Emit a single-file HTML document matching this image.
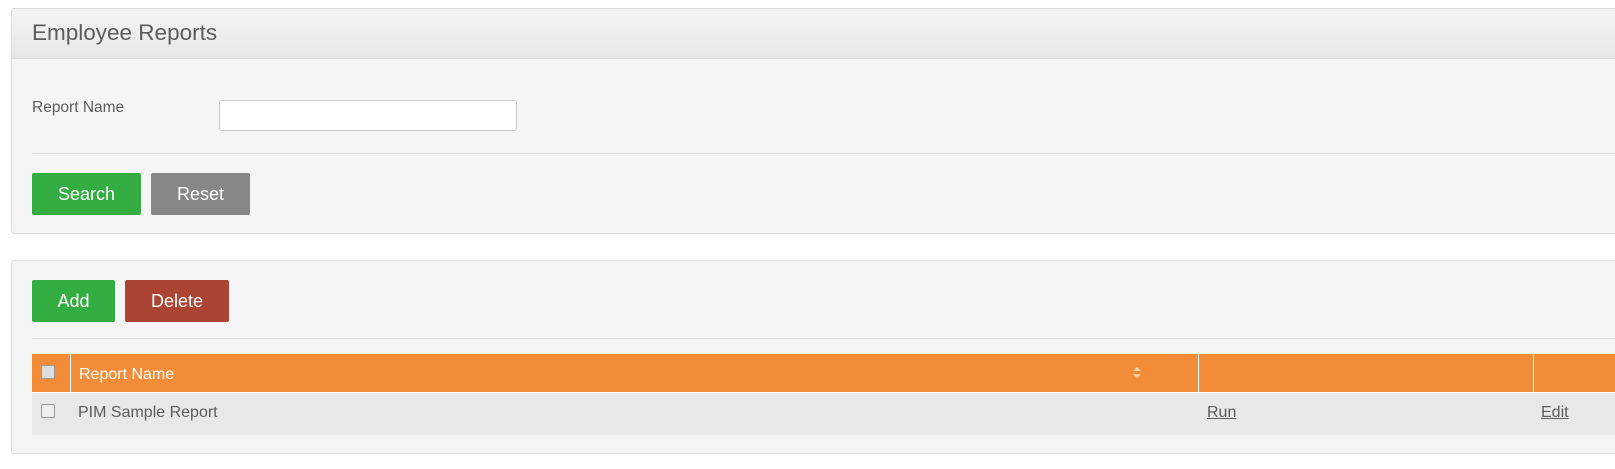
<!DOCTYPE html>
<html><head><style>
body{margin:0;background:#fff;font-family:"Liberation Sans",Arial,sans-serif;width:1615px;height:469px;overflow:hidden;position:relative}
.p{position:absolute;left:11px;width:1620px;background:#f5f5f5;border:1px solid #dcdcdc;border-radius:3px;box-sizing:border-box}
.a{position:absolute}
.btn{position:absolute;color:#fff;font-size:18px;text-align:center;border-radius:2px;box-sizing:border-box}
</style></head><body>
<div class="p" style="top:8px;height:226px">
 <div class="a" style="left:0;top:0;right:0;height:49px;background:linear-gradient(#f3f3f3,#e8e8e8);border-bottom:1px solid #d9d9d9"></div>
 <div class="a" style="left:20px;top:11px;font-size:22.5px;color:#5c5c5c">Employee Reports</div>
 <div class="a" style="left:20px;top:90px;font-size:15.5px;color:#5c5c5c">Report Name</div>
 <div class="a" style="left:207px;top:91px;width:298px;height:31px;background:#fff;border:1px solid #ccc;border-radius:3px;box-sizing:border-box"></div>
 <div class="a" style="left:20px;top:144px;right:0;height:1px;background:#ddd"></div>
 <div class="btn" style="left:20px;top:164px;width:109px;height:42px;line-height:42px;background:#33ad41">Search</div>
 <div class="btn" style="left:139px;top:164px;width:99px;height:42px;line-height:42px;background:#878787">Reset</div>
</div>
<div class="p" style="top:260px;height:194px">
 <div class="btn" style="left:20px;top:19px;width:83px;height:42px;line-height:42px;background:#33ad41">Add</div>
 <div class="btn" style="left:113px;top:19px;width:104px;height:42px;line-height:42px;background:#ab4432">Delete</div>
 <div class="a" style="left:20px;top:77px;right:0;height:1px;background:#ddd"></div>
 <div class="a" style="left:20px;top:93px;right:0;height:38px;background:#f28c38"></div>
 <div class="a" style="left:58px;top:93px;width:1px;height:38px;background:#fff"></div>
 <div class="a" style="left:1186px;top:93px;width:1px;height:38px;background:#fff"></div>
 <div class="a" style="left:1521px;top:93px;width:1px;height:38px;background:#fff"></div>
 <div class="a" style="left:20px;top:131px;right:0;height:1px;background:#fff"></div>
 <div class="a" style="left:29px;top:104px;width:12px;height:12px;background:#ddd;border:1px solid #999;border-radius:2px"></div>
 <div class="a" style="left:67px;top:105px;font-size:16px;color:#fff">Report Name</div>
 <svg class="a" style="left:1120px;top:105px" width="10" height="14"><path d="M1 5L5 1L9 5Z M1 8L5 12L9 8Z" fill="#fbd3b0"/></svg>
 <div class="a" style="left:20px;top:132px;right:0;height:42px;background:#e8e8e8"></div>
 <div class="a" style="left:29px;top:143px;width:12px;height:12px;background:#eee;border:1px solid #999;border-radius:2px"></div>
 <div class="a" style="left:66px;top:143px;font-size:16px;color:#5c5c5c">PIM Sample Report</div>
 <div class="a" style="left:1195px;top:143px;font-size:16px;color:#5c5c5c;text-decoration:underline">Run</div>
 <div class="a" style="left:1529px;top:143px;font-size:16px;color:#5c5c5c;text-decoration:underline">Edit</div>
</div>
</body></html>
